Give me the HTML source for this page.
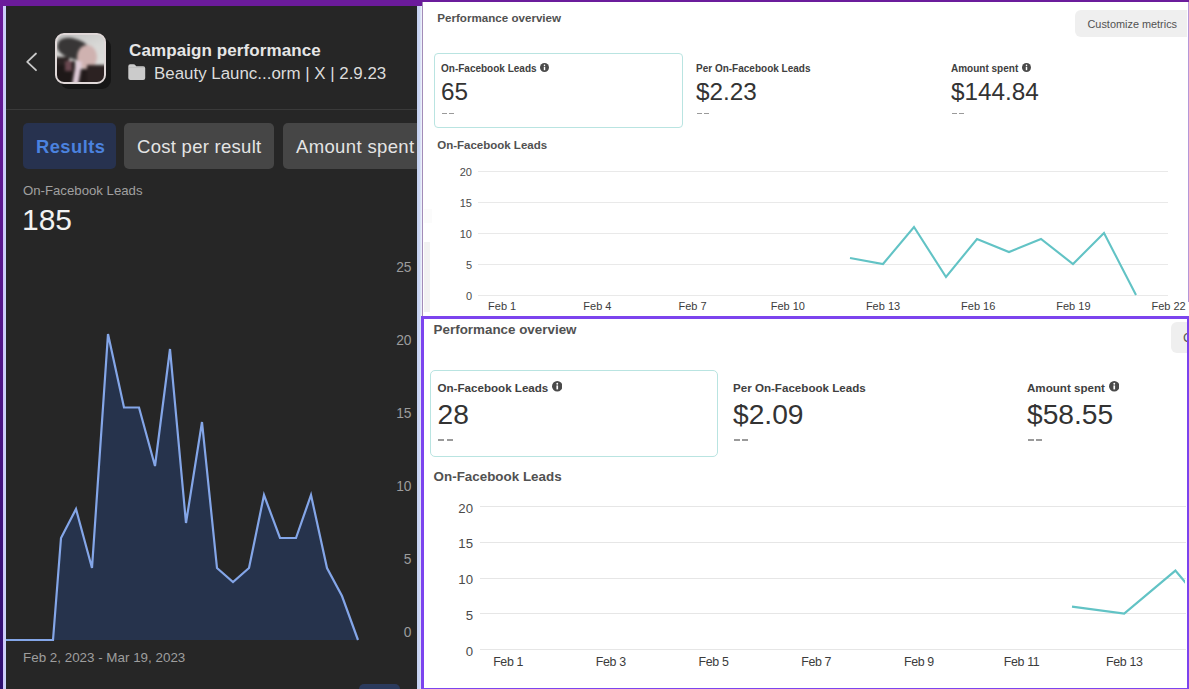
<!DOCTYPE html>
<html><head><meta charset="utf-8">
<style>
*{margin:0;padding:0;box-sizing:border-box}
html,body{width:1189px;height:689px;overflow:hidden;background:#fff}
body{position:relative;font-family:"Liberation Sans",sans-serif}
.a{position:absolute;white-space:nowrap;line-height:1}
.b{font-weight:bold}
</style></head>
<body>
<!-- LEFT DARK PANEL -->
<div class="a" style="left:0;top:0;width:422px;height:689px;background:linear-gradient(180deg,#6a1a9a 0%,#55168a 45%,#2e0f70 100%)"></div>
<div class="a" style="left:0;top:0;width:422px;height:6px;background:#6b1b9b"></div>
<div class="a" style="left:3px;top:5.5px;width:3px;height:684px;background:linear-gradient(90deg,#d2c4fc,#c6d6f8)"></div>
<div class="a" style="left:417px;top:5.5px;width:5px;height:684px;background:linear-gradient(90deg,#c4d0f0 0%,#cad6f4 50%,#f4f6fc 100%)"></div>
<div class="a" style="left:6px;top:5.5px;width:411px;height:684px;background:#262626"></div>

<!-- header -->
<svg class="a" style="left:20px;top:45px" width="24" height="32" viewBox="0 0 24 32"><path d="M16 8.5 L7.2 16.8 L16 25.2" fill="none" stroke="#c9c9c9" stroke-width="1.8" stroke-linecap="round" stroke-linejoin="round"/></svg>
<div class="a" style="left:60px;top:38px;width:51px;height:51px;border-radius:9px;background:#161616"></div>
<div class="a" style="left:55px;top:33px;width:51px;height:51px;border-radius:9px;border:2px solid #e0d8d8;overflow:hidden;background:#d2d2d0">
  <div class="a" style="left:-4px;top:-4px;width:55px;height:55px;filter:blur(1.6px)">
    <div class="a" style="left:0;top:0;width:55px;height:55px;background:linear-gradient(160deg,#bdbdbd 0%,#d8d8d6 40%,#e2e2e0 100%)"></div>
    <div class="a" style="left:4px;top:8px;width:34px;height:20px;border-radius:45%;background:#383636;transform:rotate(18deg)"></div>
    <div class="a" style="left:24px;top:14px;width:20px;height:24px;border-radius:50%;background:#cfb2b0"></div>
    <div class="a" style="left:0;top:30px;width:22px;height:25px;background:#1e1818"></div>
    <div class="a" style="left:18px;top:38px;width:40px;height:17px;background:#221a1a"></div>
    <div class="a" style="left:34px;top:34px;width:21px;height:21px;background:#2c2222"></div>
    <div class="a" style="left:2px;top:26px;width:14px;height:8px;background:#2a2222"></div>
    <div class="a" style="left:21px;top:30px;width:6px;height:26px;background:#e0ccd8;transform:rotate(10deg)"></div>
    <div class="a" style="left:12px;top:30px;width:7px;height:10px;background:#6a4850"></div>
  </div>
</div>
<div class="a b" style="left:129px;top:42px;font-size:17px;letter-spacing:0.1px;color:#e6e6e6">Campaign performance</div>
<svg class="a" style="left:128px;top:64px" width="18" height="17" viewBox="0 0 18 17"><path d="M0.3 2.2 Q0.3 0.3 2.2 0.3 L5.4 0.3 Q6.8 0.3 7.6 1.4 L8.3 2.3 L15.2 2.3 Q17.2 2.3 17.2 4.3 L17.2 14 Q17.2 16 15.2 16 L2.3 16 Q0.3 16 0.3 14 Z" fill="#cbcbcb"/><path d="M0.8 3.6 L16.8 3.6" stroke="#9a9a9a" stroke-width="0.6" opacity="0.5"/></svg>
<div class="a" style="left:154px;top:65.5px;font-size:16.9px;color:#dcdcdc">Beauty Launc...orm | X | 2.9.23</div>
<div class="a" style="left:6px;top:109px;width:411px;height:1px;background:#3a3a3a"></div>

<!-- tabs -->
<div class="a" style="left:23px;top:123px;width:93px;height:46px;border-radius:5px;background:#27324f"></div>
<div class="a b" style="left:36px;top:138px;font-size:18.3px;letter-spacing:0.5px;color:#4b82df">Results</div>
<div class="a" style="left:124px;top:123px;width:150px;height:46px;border-radius:5px;background:#464646"></div>
<div class="a" style="left:137px;top:137.8px;font-size:18.5px;letter-spacing:0.28px;color:#e4e4e4">Cost per result</div>
<div class="a" style="left:283px;top:123px;width:134px;height:46px;border-radius:5px 0 0 5px;background:#464646"></div>
<div class="a" style="left:296px;top:137.8px;font-size:18.5px;letter-spacing:0.36px;color:#e4e4e4">Amount spent</div>

<div class="a" style="left:23px;top:184px;font-size:13.2px;color:#a0a0a0">On-Facebook Leads</div>
<div class="a" style="left:22px;top:205px;font-size:30px;color:#f2f2f2">185</div>

<!-- dark chart -->
<svg class="a" style="left:0;top:0" width="417" height="689" viewBox="0 0 417 689">
<polygon points="6,640 53,640 61,538 76,509 92,568 108,334 124,407.5 139,407.5 155,466 170,349 186,523 202,422 217,568 233,582 249,568 264,495 280,538 296,538 311,495 327,568 342,596 358,640" fill="#26334c"/>
<polyline points="6,640 53,640 61,538 76,509 92,568 108,334 124,407.5 139,407.5 155,466 170,349 186,523 202,422 217,568 233,582 249,568 264,495 280,538 296,538 311,495 327,568 342,596 358,640" fill="none" stroke="#84a6e8" stroke-width="2.2" stroke-linejoin="miter"/>
</svg>
<div class="a" style="left:371.5px;top:261.1px;width:40px;text-align:right;font-size:13.8px;color:#9c9c9c">25</div>
<div class="a" style="left:371.5px;top:334.1px;width:40px;text-align:right;font-size:13.8px;color:#9c9c9c">20</div>
<div class="a" style="left:371.5px;top:407.1px;width:40px;text-align:right;font-size:13.8px;color:#9c9c9c">15</div>
<div class="a" style="left:371.5px;top:480.1px;width:40px;text-align:right;font-size:13.8px;color:#9c9c9c">10</div>
<div class="a" style="left:371.5px;top:553.1px;width:40px;text-align:right;font-size:13.8px;color:#9c9c9c">5</div>
<div class="a" style="left:371.5px;top:626.1px;width:40px;text-align:right;font-size:13.8px;color:#9c9c9c">0</div>
<div class="a" style="left:23px;top:651.2px;font-size:13.4px;color:#9e9e9e">Feb 2, 2023 - Mar 19, 2023</div>
<div class="a" style="left:359px;top:684px;width:41px;height:10px;border-radius:5px;background:#2b3a5c"></div>

<!-- TOP RIGHT PANEL -->
<div class="a" style="left:422px;top:0;width:767px;height:316px;background:#6b1c9c"></div>
<div class="a" style="left:422px;top:2px;width:767px;height:314px;background:#ffffff;border-left:1px solid #a38cb8"></div>
<div class="a" style="left:1188px;top:2px;width:1px;height:300px;background:#b596d8"></div>
<div class="a" style="left:424px;top:242px;width:6px;height:70px;background:#f2f2f2"></div>
<div class="a" style="left:424px;top:209px;width:8px;height:14px;background:#fbfbfb"></div>

<div class="a b" style="left:437.3px;top:12.3px;font-size:11.60px;color:#515151;">Performance overview</div>
<div class="a" style="left:1075px;top:9.8px;width:112px;height:27.2px;border-radius:6px 0 0 6px;background:#efefef"></div>
<div class="a" style="left:1087.5px;top:18.8px;font-size:10.90px;color:#525252;">Customize metrics</div>
<div class="a" style="left:434px;top:53px;width:249px;height:75px;border:1px solid #b9e4e1;border-radius:4px"></div>
<div class="a b" style="left:441.0px;top:63.9px;font-size:10.00px;color:#404040;">On-Facebook Leads</div>
<svg class="a" style="left:540.0px;top:63.0px" width="9.0" height="9.0" viewBox="0 0 10 10"><circle cx="5" cy="5" r="5" fill="#4a4a4a"/><rect x="4.2" y="4.2" width="1.6" height="3.8" fill="#fff"/><circle cx="5" cy="2.6" r="0.9" fill="#fff"/></svg>
<div class="a" style="left:441.0px;top:79.7px;font-size:24.30px;color:#333;">65</div>
<div class="a" style="left:441.8px;top:113.0px;width:5.3px;height:1.4px;background:#9a9a9a"></div><div class="a" style="left:449.0px;top:113.0px;width:5.3px;height:1.4px;background:#9a9a9a"></div>
<div class="a b" style="left:696.0px;top:63.9px;font-size:10.00px;color:#404040;">Per On-Facebook Leads</div>
<div class="a" style="left:696.0px;top:79.7px;font-size:24.30px;color:#333;">$2.23</div>
<div class="a" style="left:696.8px;top:113.0px;width:5.3px;height:1.4px;background:#9a9a9a"></div><div class="a" style="left:704.0px;top:113.0px;width:5.3px;height:1.4px;background:#9a9a9a"></div>
<div class="a b" style="left:951.0px;top:63.9px;font-size:10.00px;color:#404040;">Amount spent</div>
<svg class="a" style="left:1021.7px;top:63.0px" width="9.0" height="9.0" viewBox="0 0 10 10"><circle cx="5" cy="5" r="5" fill="#4a4a4a"/><rect x="4.2" y="4.2" width="1.6" height="3.8" fill="#fff"/><circle cx="5" cy="2.6" r="0.9" fill="#fff"/></svg>
<div class="a" style="left:951.0px;top:79.7px;font-size:24.30px;color:#333;">$144.84</div>
<div class="a" style="left:951.8px;top:113.0px;width:5.3px;height:1.4px;background:#9a9a9a"></div><div class="a" style="left:959.0px;top:113.0px;width:5.3px;height:1.4px;background:#9a9a9a"></div>
<div class="a b" style="left:437.2px;top:139.9px;font-size:11.50px;color:#515151;">On-Facebook Leads</div>
<div class="a" style="left:478px;top:170.7px;width:690px;height:1px;background:#e9e9e9"></div>
<div class="a" style="left:440px;top:166.8px;width:32px;text-align:right;font-size:11px;color:#4a4a4a">20</div>
<div class="a" style="left:478px;top:201.7px;width:690px;height:1px;background:#e9e9e9"></div>
<div class="a" style="left:440px;top:197.8px;width:32px;text-align:right;font-size:11px;color:#4a4a4a">15</div>
<div class="a" style="left:478px;top:232.7px;width:690px;height:1px;background:#e9e9e9"></div>
<div class="a" style="left:440px;top:228.8px;width:32px;text-align:right;font-size:11px;color:#4a4a4a">10</div>
<div class="a" style="left:478px;top:263.7px;width:690px;height:1px;background:#e9e9e9"></div>
<div class="a" style="left:440px;top:259.8px;width:32px;text-align:right;font-size:11px;color:#4a4a4a">5</div>
<div class="a" style="left:478px;top:294.7px;width:690px;height:1px;background:#e9e9e9"></div>
<div class="a" style="left:440px;top:290.8px;width:32px;text-align:right;font-size:11px;color:#4a4a4a">0</div>
<div class="a" style="left:472.2px;top:301.2px;width:60px;text-align:center;font-size:11px;color:#3c3c3c">Feb 1</div>
<div class="a" style="left:567.4px;top:301.2px;width:60px;text-align:center;font-size:11px;color:#3c3c3c">Feb 4</div>
<div class="a" style="left:662.6px;top:301.2px;width:60px;text-align:center;font-size:11px;color:#3c3c3c">Feb 7</div>
<div class="a" style="left:757.8px;top:301.2px;width:60px;text-align:center;font-size:11px;color:#3c3c3c">Feb 10</div>
<div class="a" style="left:853.0px;top:301.2px;width:60px;text-align:center;font-size:11px;color:#3c3c3c">Feb 13</div>
<div class="a" style="left:948.2px;top:301.2px;width:60px;text-align:center;font-size:11px;color:#3c3c3c">Feb 16</div>
<div class="a" style="left:1043.4px;top:301.2px;width:60px;text-align:center;font-size:11px;color:#3c3c3c">Feb 19</div>
<div class="a" style="left:1138.6px;top:301.2px;width:60px;text-align:center;font-size:11px;color:#3c3c3c">Feb 22</div>
<svg class="a" style="left:0;top:0" width="1189" height="316"><polyline points="850,258 883,264 914,227 946,277 977,239 1009,252 1041,239 1073,264 1104,233 1136,295" fill="none" stroke="#62c3c5" stroke-width="2.1" stroke-linejoin="miter"/></svg>
<div class="a" style="left:421px;top:316px;width:768px;height:373px;background:#fff;border-style:solid;border-color:#7c44ee;border-width:3.6px 2.5px 1.6px 3.8px"></div>
<div class="a b" style="left:433.6px;top:323.0px;font-size:13.40px;color:#515151;">Performance overview</div>
<div class="a" style="left:1171px;top:321.5px;width:16px;height:31px;border-radius:6px 0 0 6px;background:#efefef;overflow:hidden"><div class="a" style="left:12px;top:9px;font-size:13px;color:#555">C</div></div>
<div class="a" style="left:430px;top:370px;width:288px;height:87px;border:1px solid #b9e4e1;border-radius:5px"></div>
<div class="a b" style="left:437.5px;top:381.7px;font-size:11.60px;color:#404040;">On-Facebook Leads</div>
<svg class="a" style="left:551.9px;top:381.3px" width="10.5" height="10.5" viewBox="0 0 10 10"><circle cx="5" cy="5" r="5" fill="#4a4a4a"/><rect x="4.2" y="4.2" width="1.6" height="3.8" fill="#fff"/><circle cx="5" cy="2.6" r="0.9" fill="#fff"/></svg>
<div class="a" style="left:437.5px;top:400.0px;font-size:28.20px;color:#333;">28</div>
<div class="a" style="left:438.3px;top:439.2px;width:6.2px;height:1.6px;background:#9a9a9a"></div><div class="a" style="left:446.7px;top:439.2px;width:6.2px;height:1.6px;background:#9a9a9a"></div>
<div class="a b" style="left:733.0px;top:381.7px;font-size:11.60px;color:#404040;">Per On-Facebook Leads</div>
<div class="a" style="left:733.0px;top:400.0px;font-size:28.20px;color:#333;">$2.09</div>
<div class="a" style="left:733.8px;top:439.2px;width:6.2px;height:1.6px;background:#9a9a9a"></div><div class="a" style="left:742.2px;top:439.2px;width:6.2px;height:1.6px;background:#9a9a9a"></div>
<div class="a b" style="left:1027.0px;top:381.7px;font-size:11.60px;color:#404040;">Amount spent</div>
<svg class="a" style="left:1108.6px;top:381.3px" width="10.5" height="10.5" viewBox="0 0 10 10"><circle cx="5" cy="5" r="5" fill="#4a4a4a"/><rect x="4.2" y="4.2" width="1.6" height="3.8" fill="#fff"/><circle cx="5" cy="2.6" r="0.9" fill="#fff"/></svg>
<div class="a" style="left:1027.0px;top:400.0px;font-size:28.20px;color:#333;">$58.55</div>
<div class="a" style="left:1027.8px;top:439.2px;width:6.2px;height:1.6px;background:#9a9a9a"></div><div class="a" style="left:1036.2px;top:439.2px;width:6.2px;height:1.6px;background:#9a9a9a"></div>
<div class="a b" style="left:433.6px;top:469.5px;font-size:13.40px;color:#515151;">On-Facebook Leads</div>
<div class="a" style="left:480px;top:506.0px;width:706px;height:1px;background:#e6e6e6"></div>
<div class="a" style="left:432px;top:501.5px;width:41px;text-align:right;font-size:13.2px;color:#4a4a4a">20</div>
<div class="a" style="left:480px;top:541.8px;width:706px;height:1px;background:#e6e6e6"></div>
<div class="a" style="left:432px;top:537.3px;width:41px;text-align:right;font-size:13.2px;color:#4a4a4a">15</div>
<div class="a" style="left:480px;top:577.6px;width:706px;height:1px;background:#e6e6e6"></div>
<div class="a" style="left:432px;top:573.1px;width:41px;text-align:right;font-size:13.2px;color:#4a4a4a">10</div>
<div class="a" style="left:480px;top:613.4px;width:706px;height:1px;background:#e6e6e6"></div>
<div class="a" style="left:432px;top:608.9px;width:41px;text-align:right;font-size:13.2px;color:#4a4a4a">5</div>
<div class="a" style="left:480px;top:649.2px;width:706px;height:1px;background:#e6e6e6"></div>
<div class="a" style="left:432px;top:644.7px;width:41px;text-align:right;font-size:13.2px;color:#4a4a4a">0</div>
<div class="a" style="left:473.1px;top:655.5px;width:70px;text-align:center;font-size:12.4px;letter-spacing:-0.35px;color:#3c3c3c">Feb 1</div>
<div class="a" style="left:575.8px;top:655.5px;width:70px;text-align:center;font-size:12.4px;letter-spacing:-0.35px;color:#3c3c3c">Feb 3</div>
<div class="a" style="left:678.5px;top:655.5px;width:70px;text-align:center;font-size:12.4px;letter-spacing:-0.35px;color:#3c3c3c">Feb 5</div>
<div class="a" style="left:781.2px;top:655.5px;width:70px;text-align:center;font-size:12.4px;letter-spacing:-0.35px;color:#3c3c3c">Feb 7</div>
<div class="a" style="left:883.9px;top:655.5px;width:70px;text-align:center;font-size:12.4px;letter-spacing:-0.35px;color:#3c3c3c">Feb 9</div>
<div class="a" style="left:986.6px;top:655.5px;width:70px;text-align:center;font-size:12.4px;letter-spacing:-0.35px;color:#3c3c3c">Feb 11</div>
<div class="a" style="left:1089.3px;top:655.5px;width:70px;text-align:center;font-size:12.4px;letter-spacing:-0.35px;color:#3c3c3c">Feb 13</div>
<svg class="a" style="left:0;top:0" width="1185" height="686"><polyline points="1072,606.6 1124.2,613.5 1175.4,570.6 1200,600" fill="none" stroke="#62c3c5" stroke-width="2.2" stroke-linejoin="miter"/></svg>
</body></html>
